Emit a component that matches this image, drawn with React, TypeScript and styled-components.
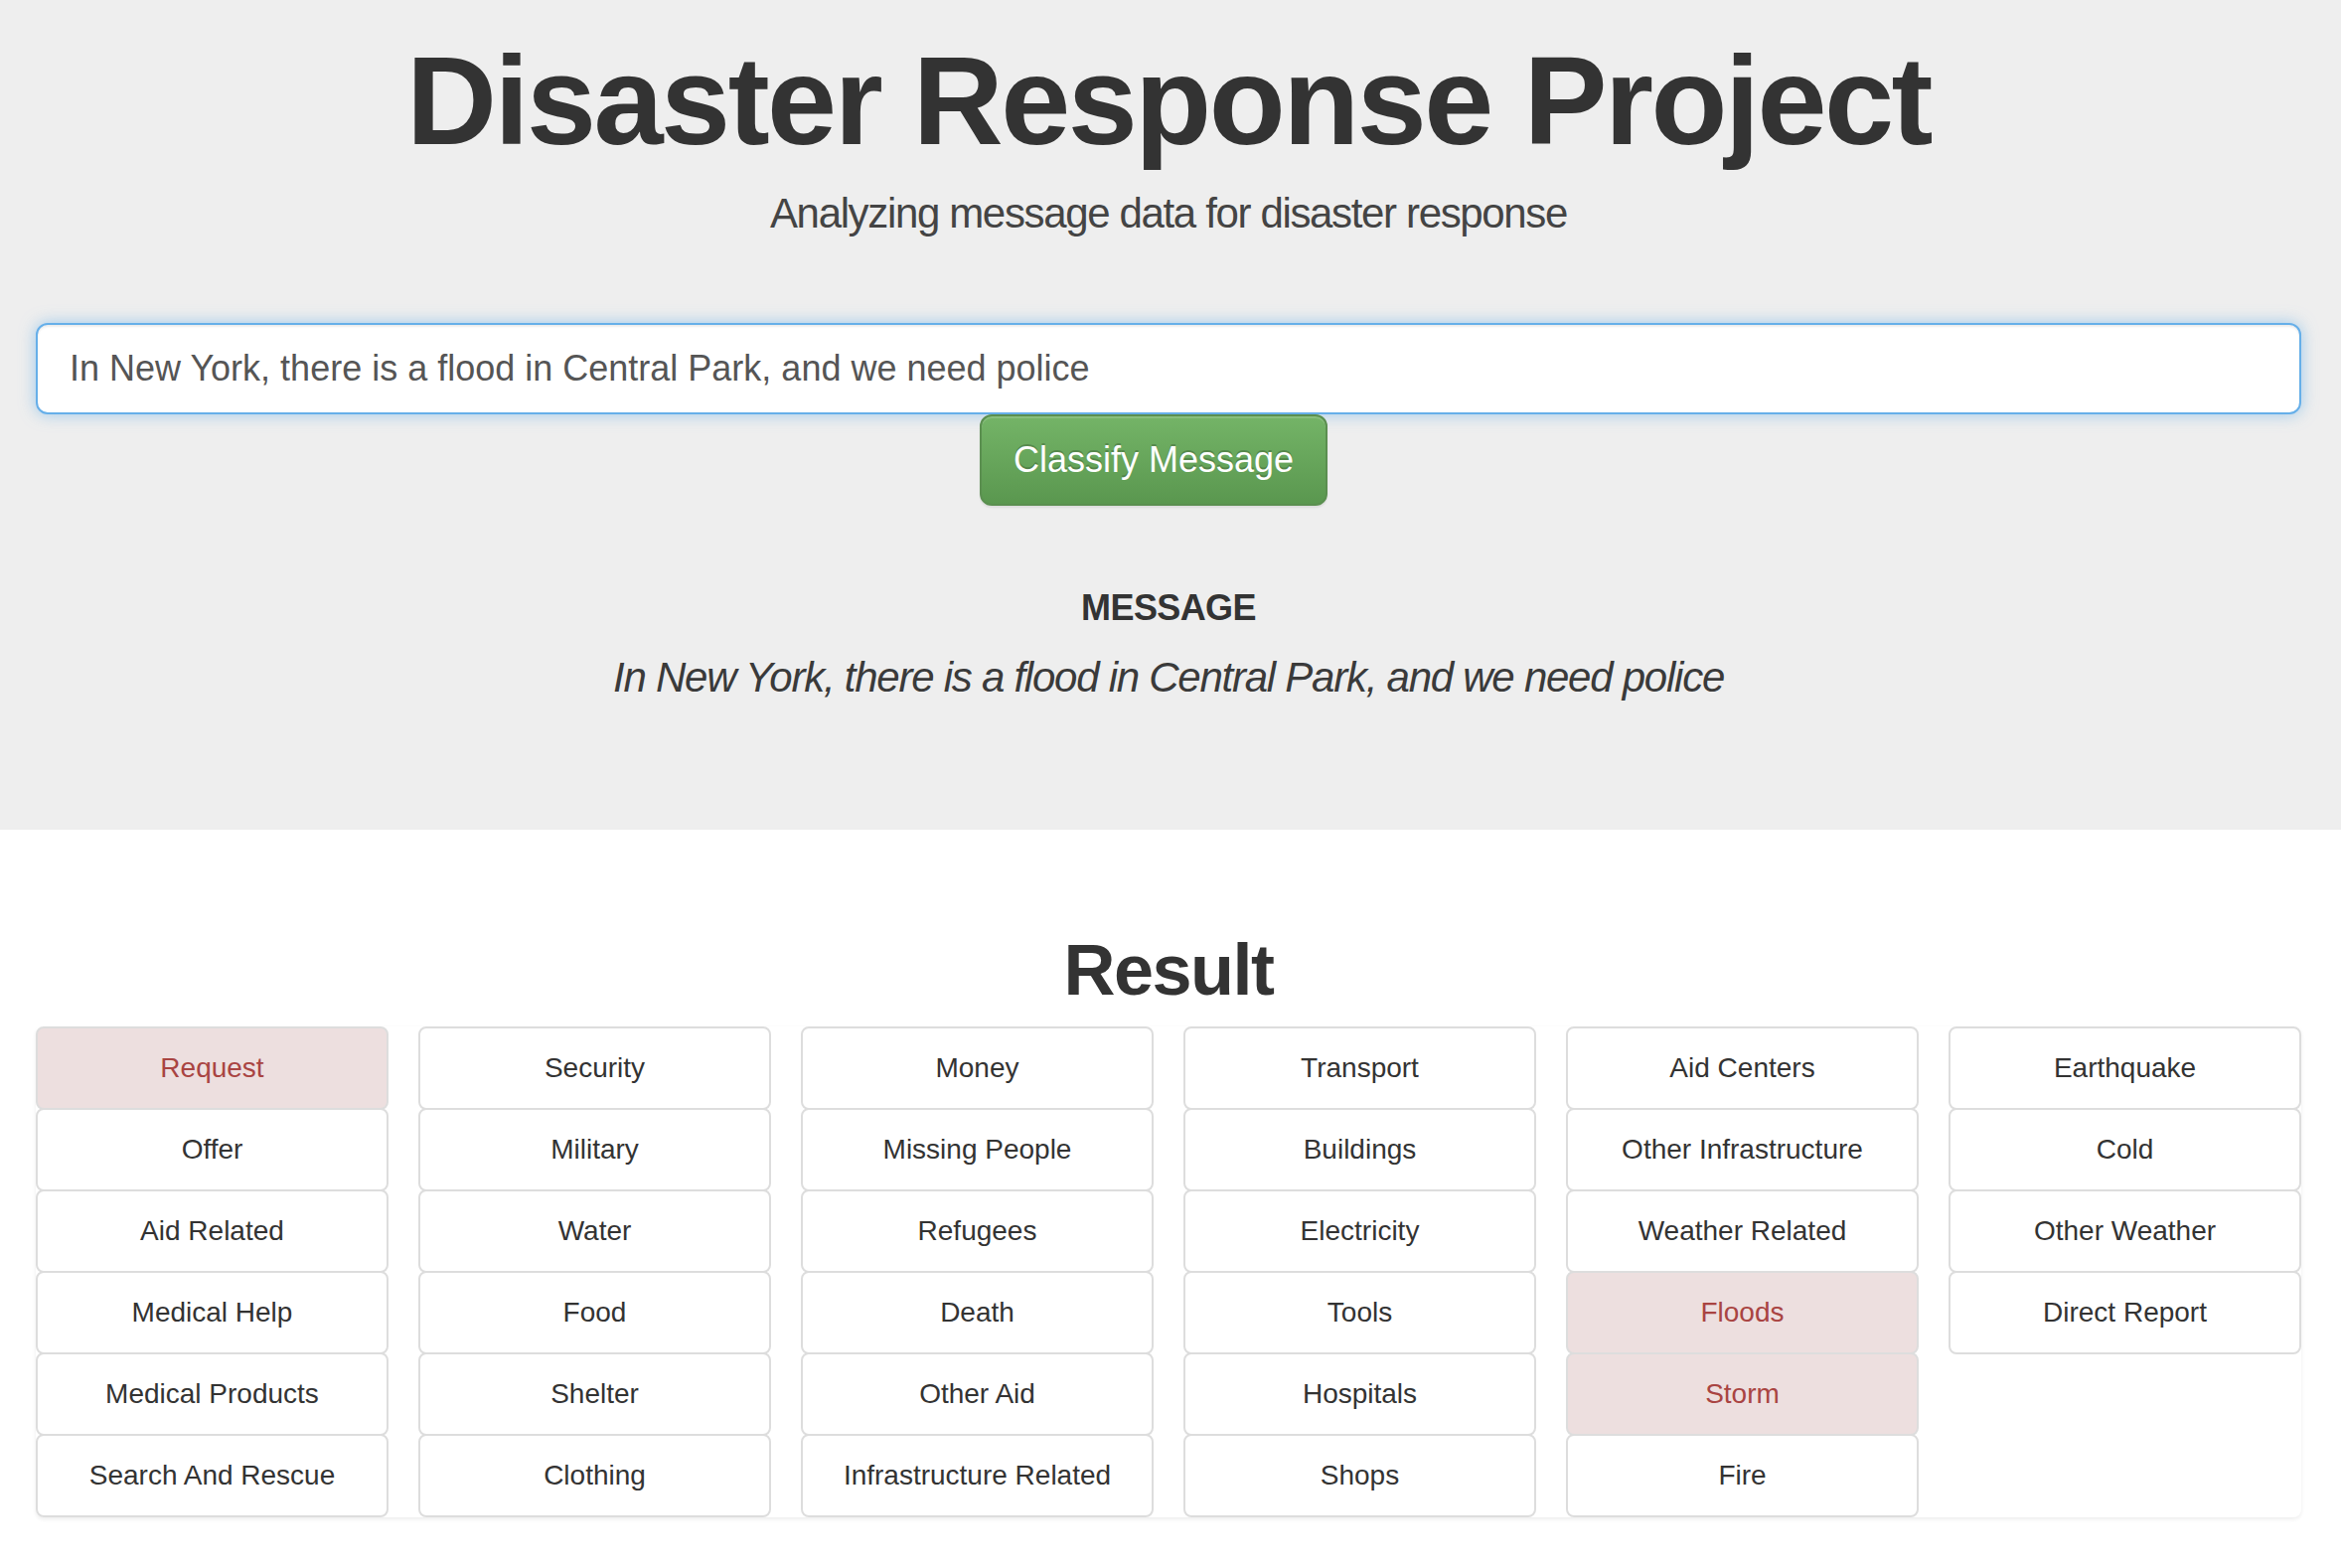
import React, { FC } from 'react'
import styled, { createGlobalStyle } from 'styled-components'

interface Category {
  name: string
  hit?: boolean
}

const columns: Category[][] = [
  [
    { name: 'Request', hit: true },
    { name: 'Offer' },
    { name: 'Aid Related' },
    { name: 'Medical Help' },
    { name: 'Medical Products' },
    { name: 'Search And Rescue' },
  ],
  [
    { name: 'Security' },
    { name: 'Military' },
    { name: 'Water' },
    { name: 'Food' },
    { name: 'Shelter' },
    { name: 'Clothing' },
  ],
  [
    { name: 'Money' },
    { name: 'Missing People' },
    { name: 'Refugees' },
    { name: 'Death' },
    { name: 'Other Aid' },
    { name: 'Infrastructure Related' },
  ],
  [
    { name: 'Transport' },
    { name: 'Buildings' },
    { name: 'Electricity' },
    { name: 'Tools' },
    { name: 'Hospitals' },
    { name: 'Shops' },
  ],
  [
    { name: 'Aid Centers' },
    { name: 'Other Infrastructure' },
    { name: 'Weather Related' },
    { name: 'Floods', hit: true },
    { name: 'Storm', hit: true },
    { name: 'Fire' },
  ],
  [{ name: 'Earthquake' }, { name: 'Cold' }, { name: 'Other Weather' }, { name: 'Direct Report' }],
]

const message = 'In New York, there is a flood in Central Park, and we need police'

const GlobalStyle = createGlobalStyle`
  html, body {
    margin: 0;
    padding: 0;
    background: #fff;
  }
  body {
    font-family: "Liberation Sans", Arial, sans-serif;
    color: #333;
  }
  * {
    box-sizing: border-box;
  }
`

const Jumbotron = styled.header`
  background: #eee;
  padding: 33px 40px 123px 36px;
  text-align: center;
`

const Title = styled.h1`
  margin: 0;
  font-size: 126px;
  line-height: 1.1;
  font-weight: 700;
  letter-spacing: -2.5px;
  color: #333;
`

const Subtitle = styled.p`
  margin: 14px 0 0;
  font-size: 42px;
  line-height: 1.4;
  font-weight: 300;
  letter-spacing: -1.35px;
  color: #444;
`

const Form = styled.form`
  margin-top: 81px;
  display: flex;
  flex-direction: column;
`

const Input = styled.input`
  width: 100%;
  height: 92px;
  padding: 0 32px;
  font-family: inherit;
  font-size: 36px;
  color: #555;
  background: #fff;
  border: 2px solid #66afe9;
  border-radius: 12px;
  outline: none;
  box-shadow: inset 0 2px 2px rgba(0, 0, 0, 0.075), 0 0 16px rgba(102, 175, 233, 0.6);
`

const ButtonRow = styled.div`
  display: flex;
  justify-content: center;
  padding-right: 30px;
`

const Button = styled.button`
  height: 92px;
  padding: 0 32px;
  font-family: inherit;
  font-size: 36px;
  color: #fff;
  text-shadow: 0 -2px 0 rgba(0, 0, 0, 0.2);
  background: linear-gradient(to bottom, #74b467 0%, #5a974f 100%);
  border: 2px solid #5b8f50;
  border-radius: 12px;
  box-shadow: inset 0 2px 0 rgba(255, 255, 255, 0.15), 0 2px 2px rgba(0, 0, 0, 0.075);
  cursor: pointer;
`

const Label = styled.h4`
  margin: 83px 0 0;
  font-size: 36px;
  line-height: 1.1;
  font-weight: 700;
  letter-spacing: -0.6px;
  color: #333;
`

const Quote = styled.p`
  margin: 21px 0 0;
  font-size: 42px;
  line-height: 1.4;
  font-style: italic;
  font-weight: 300;
  letter-spacing: -1.25px;
  color: #3a3a3a;
`

const Results = styled.main`
  padding: 102px 40px 60px 36px;
`

const ResultTitle = styled.h1`
  margin: 0 0 17px;
  text-align: center;
  font-size: 72px;
  line-height: 1.1;
  font-weight: 700;
  letter-spacing: -1.5px;
  color: #333;
`

const Grid = styled.div`
  display: grid;
  grid-template-columns: repeat(6, 1fr);
  column-gap: 30px;
  align-items: start;
  border-radius: 8px;
  box-shadow: 0 2px 4px rgba(0, 0, 0, 0.075);
  height: 494px;
`

const Column = styled.ul`
  list-style: none;
  margin: 0;
  padding: 0;
`

const Item = styled.li<{ hit?: boolean }>`
  height: 84px;
  margin-bottom: -2px;
  padding: 0 30px;
  display: flex;
  align-items: center;
  justify-content: center;
  font-size: 28px;
  color: ${(p) => (p.hit ? '#a94442' : '#333')};
  background: ${(p) => (p.hit ? '#eddfdf' : '#fff')};
  border: 2px solid #ddd;
  border-radius: 8px;
  white-space: nowrap;
`

const App: FC = () => {
  return (
    <>
      <GlobalStyle />
      <Jumbotron>
        <Title>Disaster Response Project</Title>
        <Subtitle>Analyzing message data for disaster response</Subtitle>
        <Form onSubmit={(e) => e.preventDefault()}>
          <Input type="text" defaultValue={message} />
          <ButtonRow>
            <Button type="submit">Classify Message</Button>
          </ButtonRow>
        </Form>
        <Label>MESSAGE</Label>
        <Quote>{message}</Quote>
      </Jumbotron>
      <Results>
        <ResultTitle>Result</ResultTitle>
        <Grid>
          {columns.map((col, i) => (
            <Column key={i}>
              {col.map((c) => (
                <Item key={c.name} hit={c.hit}>
                  {c.name}
                </Item>
              ))}
            </Column>
          ))}
        </Grid>
      </Results>
    </>
  )
}

export default App
